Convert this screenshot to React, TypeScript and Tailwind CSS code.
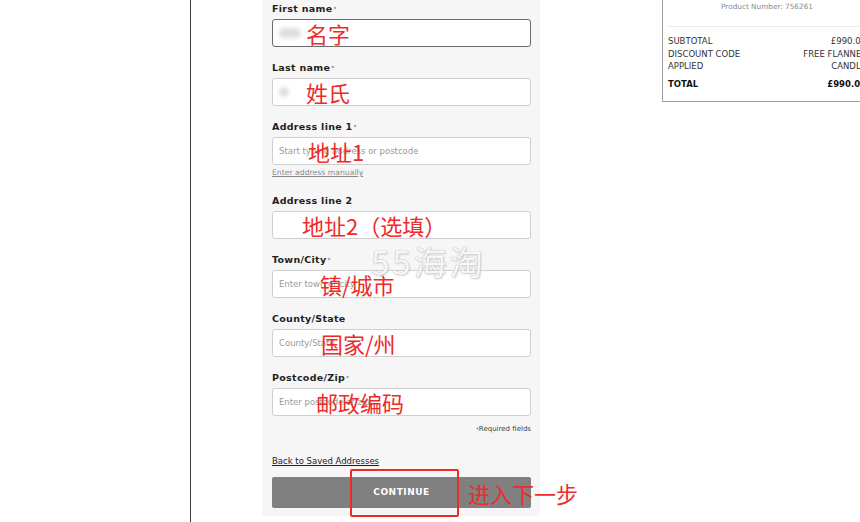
const FONT = { fontFamily: '"DejaVu Sans", "Noto Sans CJK SC", sans-serif' };
const CJK = { fontFamily: '"Noto Sans CJK SC", sans-serif' };

function Field({
  label,
  required,
  placeholder,
  note,
  focused,
  blob,
  mark,
  markLeft,
  top = 15,
}: {
  label: string;
  required?: boolean;
  placeholder?: string;
  note?: string;
  focused?: boolean;
  blob?: number;
  mark: string;
  markLeft: number;
  top?: number;
}) {
  return (
    <div style={{ marginTop: top }}>
      <div className="h-[12px] text-[9.5px] leading-[12px] font-bold tracking-[0.3px] text-[#1f1f1f]">
        {label}
        {required && <span className="ml-[1px] align-top text-[6px] font-normal text-[#555]">*</span>}
      </div>
      <div
        className={[
          "relative mt-[4px] h-[28px] rounded-[3px] bg-white",
          focused ? "border border-[#6b6b6b]" : "border border-[#cfcfcf]",
        ].join(" ")}
      >
        {placeholder && (
          <span className="absolute left-[6px] top-0 text-[8.5px] leading-[26px] text-[#9a9a9a]">{placeholder}</span>
        )}
        {blob ? (
          <span
            className="absolute left-[6px] top-[8px] h-[10px] rounded-full bg-[#dedede] blur-[2px]"
            style={{ width: blob }}
          />
        ) : null}
        <span
          className="absolute top-[-2px] text-[22px] leading-[30px] text-[#ee2b2b]"
          style={{ ...CJK, left: markLeft }}
        >
          {mark}
        </span>
      </div>
      {note && (
        <div className="mt-[3px] h-[10px] text-[7.7px] leading-[10px] text-[#8a8a8a] underline">{note}</div>
      )}
    </div>
  );
}

export default function App() {
  return (
    <div className="relative flex h-[522px] w-[860px] overflow-hidden bg-white" style={FONT}>
      <div className="h-full w-[191px] shrink-0 border-r border-[#3a3a3a]" />

      <div className="ml-[71px] h-[516px] w-[278px] shrink-0 bg-[#f6f6f6] pt-[3px] pl-[10px] pr-[9px] pb-[8px]">
        <Field top={0} label="First name" required focused blob={22} mark="名字" markLeft={33} />
        <Field label="Last name" required blob={10} mark="姓氏" markLeft={33} />
        <Field
          label="Address line 1"
          required
          placeholder="Start typing address or postcode"
          note="Enter address manually"
          mark="地址1"
          markLeft={35}
        />
        <Field top={17} label="Address line 2" mark="地址2（选填）" markLeft={29} />
        <Field label="Town/City" required placeholder="Enter town or city" mark="镇/城市" markLeft={47} />
        <Field label="County/State" placeholder="County/State" mark="国家/州" markLeft={48} />
        <Field label="Postcode/Zip" required placeholder="Enter postcode or zip" mark="邮政编码" markLeft={43} />

        <div className="mt-[8px] h-[10px] text-right text-[7px] leading-[10px] text-[#444]">
          <span className="align-top text-[5px]">*</span>Required fields
        </div>
        <div className="mt-[21px] h-[12px] text-[8.5px] leading-[12px] text-[#222] underline">Back to Saved Addresses</div>
        <button className="mt-[10px] flex h-[31px] w-full items-center justify-center rounded-[2px] bg-[#808080] text-[9px] font-bold tracking-[0.5px] text-white">
          CONTINUE
        </button>
      </div>

      <div className="ml-[122px] h-[102px] w-[210px] shrink-0 border-x border-b border-[#a0a0a0] bg-white px-[5px]">
        <div className="pt-[2px] text-center text-[7.3px] leading-[10px] text-[#8a8a8a]">Product Number: 756261</div>
        <div className="mt-[14px] border-t border-[#ececec]" />
        <div className="mt-[8px] grid grid-cols-2 text-[8.5px] leading-[12.5px] text-[#333]">
          <div>SUBTOTAL</div>
          <div className="text-right">£990.00</div>
          <div>
            DISCOUNT CODE
            <br />
            APPLIED
          </div>
          <div className="text-right">
            FREE FLANNEL
            <br />
            CANDLE
          </div>
          <div className="mt-[5px] font-bold text-[#111]">TOTAL</div>
          <div className="mt-[5px] text-right font-bold text-[#111]">£990.00</div>
        </div>
      </div>

      <div
        className="pointer-events-none absolute left-[371px] top-[241px] text-[33px] leading-[40px] tracking-[3px] text-[#f7f7f7]"
        style={{
          ...CJK,
          textShadow: "0 0 1px #bdbdbd, 0 0 1px #bdbdbd, 1px 1px 2px #cfcfcf",
        }}
      >
        55海淘
      </div>

      <div className="pointer-events-none absolute left-[350px] top-[469px] h-[48px] w-[109px] rounded-[2px] border-2 border-[#ee2b2b]" />
      <div
        className="pointer-events-none absolute left-[468px] top-[478px] text-[22px] leading-[30px] text-[#ee2b2b]"
        style={CJK}
      >
        进入下一步
      </div>
    </div>
  );
}
